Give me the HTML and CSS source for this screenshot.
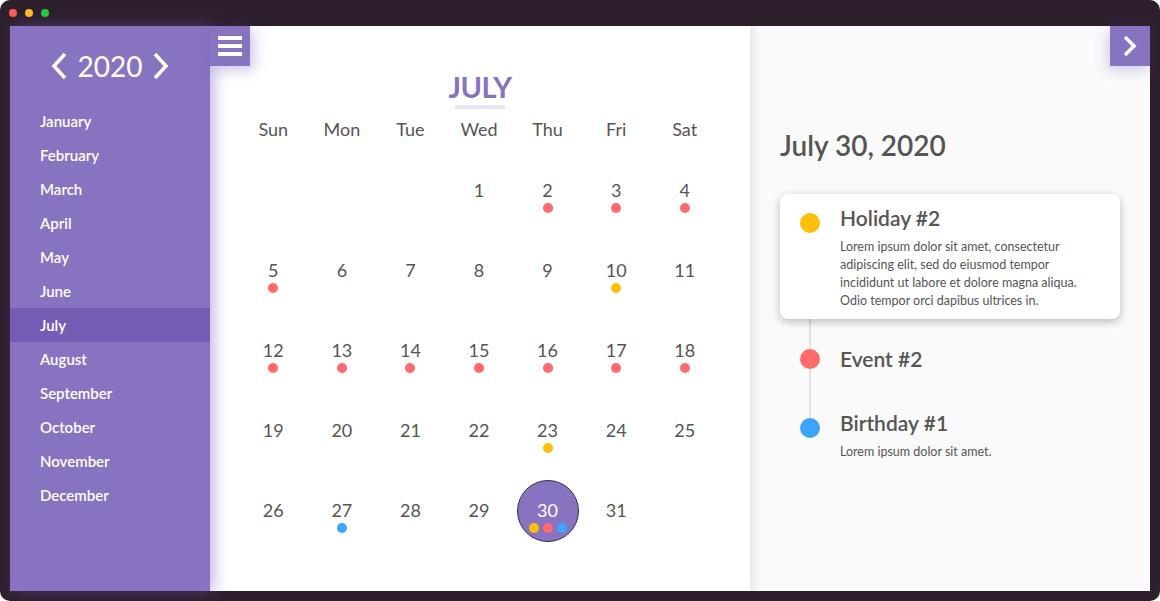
FILE: index.html
```html
<!DOCTYPE html>
<html>
<head>
<meta charset="utf-8">
<link rel="stylesheet" href="styles.css">
</head>
<body>
<div class="window">
  <div class="titlebar">
    <span class="light red"></span><span class="light yellow"></span><span class="light green"></span>
  </div>
  <div class="app">
    <aside class="sidebar">
      <div class="year">
        <svg class="chev" width="18" height="28" viewBox="0 0 18 28"><path d="M15 2 L4 14 L15 26" fill="none" stroke="#fff" stroke-width="3.5"/></svg>
        <span>2020</span>
        <svg class="chev" width="18" height="28" viewBox="0 0 18 28"><path d="M3 2 L14 14 L3 26" fill="none" stroke="#fff" stroke-width="3.5"/></svg>
      </div>
      <ul class="months">
        <li>January</li><li>February</li><li>March</li><li>April</li><li>May</li><li>June</li>
        <li class="active">July</li><li>August</li><li>September</li><li>October</li><li>November</li><li>December</li>
      </ul>
      <div class="menu-btn"><span></span><span></span><span></span></div>
    </aside>
    <main class="calendar">
      <h1 class="month-title">JULY</h1>
      <div class="grid">
        <div class="wd">Sun</div><div class="wd">Mon</div><div class="wd">Tue</div><div class="wd">Wed</div><div class="wd">Thu</div><div class="wd">Fri</div><div class="wd">Sat</div>
        <div class="day"></div><div class="day"></div><div class="day"></div>
        <div class="day"><span class="n">1</span></div>
        <div class="day"><span class="n">2</span><div class="dots"><i class="r"></i></div></div>
        <div class="day"><span class="n">3</span><div class="dots"><i class="r"></i></div></div>
        <div class="day"><span class="n">4</span><div class="dots"><i class="r"></i></div></div>
        <div class="day"><span class="n">5</span><div class="dots"><i class="r"></i></div></div>
        <div class="day"><span class="n">6</span></div>
        <div class="day"><span class="n">7</span></div>
        <div class="day"><span class="n">8</span></div>
        <div class="day"><span class="n">9</span></div>
        <div class="day"><span class="n">10</span><div class="dots"><i class="y"></i></div></div>
        <div class="day"><span class="n">11</span></div>
        <div class="day"><span class="n">12</span><div class="dots"><i class="r"></i></div></div>
        <div class="day"><span class="n">13</span><div class="dots"><i class="r"></i></div></div>
        <div class="day"><span class="n">14</span><div class="dots"><i class="r"></i></div></div>
        <div class="day"><span class="n">15</span><div class="dots"><i class="r"></i></div></div>
        <div class="day"><span class="n">16</span><div class="dots"><i class="r"></i></div></div>
        <div class="day"><span class="n">17</span><div class="dots"><i class="r"></i></div></div>
        <div class="day"><span class="n">18</span><div class="dots"><i class="r"></i></div></div>
        <div class="day"><span class="n">19</span></div>
        <div class="day"><span class="n">20</span></div>
        <div class="day"><span class="n">21</span></div>
        <div class="day"><span class="n">22</span></div>
        <div class="day"><span class="n">23</span><div class="dots"><i class="y"></i></div></div>
        <div class="day"><span class="n">24</span></div>
        <div class="day"><span class="n">25</span></div>
        <div class="day"><span class="n">26</span></div>
        <div class="day"><span class="n">27</span><div class="dots"><i class="b"></i></div></div>
        <div class="day"><span class="n">28</span></div>
        <div class="day"><span class="n">29</span></div>
        <div class="day selected"><span class="n">30</span><div class="dots"><i class="y"></i><i class="r"></i><i class="b"></i></div></div>
        <div class="day"><span class="n">31</span></div>
        <div class="day"></div>
      </div>
    </main>
    <section class="details">
      <div class="next-btn">
        <svg width="16" height="22" viewBox="0 0 16 22"><path d="M3 2 L12 11 L3 20" fill="none" stroke="#fff" stroke-width="3.5"/></svg>
      </div>
      <h2 class="date-title">July 30, 2020</h2>
      <div class="timeline">
        <div class="event card">
          <span class="dot y"></span>
          <div class="ev-body">
            <h3>Holiday #2</h3>
            <p>Lorem ipsum dolor sit amet, consectetur adipiscing elit, sed do eiusmod tempor incididunt ut labore et dolore magna aliqua. Odio tempor orci dapibus ultrices in.</p>
          </div>
        </div>
        <div class="event plain">
          <span class="dot r"></span>
          <div class="ev-body"><h3>Event #2</h3></div>
        </div>
        <div class="event last">
          <span class="dot b"></span>
          <div class="ev-body"><h3>Birthday #1</h3><p>Lorem ipsum dolor sit amet.</p></div>
        </div>
      </div>
    </section>
  </div>
</div>
</body>
</html>
```
FILE: styles.css
```css
* { box-sizing: border-box; margin: 0; padding: 0; }
html, body { width: 1160px; height: 601px; background: #fff; overflow: hidden; }
body { font-family: "Lato", "Open Sans", sans-serif; color: #555; }

.window {
  width: 1160px; height: 601px;
  background: #2e1f2d;
  border-radius: 10px;
  padding: 0 10px 10px 10px;
  display: flex; flex-direction: column;
}
.titlebar { height: 26px; display: flex; align-items: center; gap: 8px; margin-left: -1px; }
.light { width: 8px; height: 8px; border-radius: 50%; display: inline-block; }
.light.red { background: #ff5b57; }
.light.yellow { background: #fdbb2d; }
.light.green { background: #2bc83f; }

.app { flex: 1; display: flex; background: #fff; }

.sidebar {
  width: 200px; flex: none; background: #8873c1; position: relative; z-index: 3;
  box-shadow: 4px 0 14px rgba(110, 90, 190, 0.45);
  color: #fff;
}
.year { display: flex; align-items: center; justify-content: center; gap: 10px; height: 80px; font-size: 28px; }
.year span { line-height: 1; }
.months { list-style: none; margin-top: -2px; }
.months li { height: 34px; line-height: 34px; padding-left: 30px; font-size: 15px; font-weight: 600; }
.months li.active { background: #745db4; }

.menu-btn {
  position: absolute; left: 200px; top: 0; width: 40px; height: 40px; background: #8873c1;
  display: flex; flex-direction: column; align-items: center; justify-content: center; gap: 4px;
  box-shadow: 4px 4px 14px rgba(110, 90, 190, 0.35);
}
.menu-btn span { width: 24px; height: 4px; background: #fff; display: block; }

.calendar { width: 540px; flex: none; background: #fff; position: relative; z-index: 2; padding: 0 30px; box-shadow: 2px 0 10px rgba(0,0,0,0.12); }
.month-title { text-align: center; color: #8873c1; font-size: 29px; font-weight: 700; margin-top: 44px; line-height: 34px; letter-spacing: -0.5px; }
.month-title::after { content: ""; display: block; width: 50px; height: 4px; background: #e8e4f4; margin: 1px auto 0; }
.grid { display: grid; grid-template-columns: repeat(7, 1fr); grid-auto-rows: 80px; grid-template-rows: 24px; margin-top: 8px; margin-left: -1px; margin-right: 1px; }
.wd { text-align: center; font-size: 18px; line-height: 24px; color: #555; }
.day { display: flex; flex-direction: column; align-items: center; padding-top: 38px; }
.day .n { font-size: 18px; line-height: 22px; height: 22px; }
.dots { display: flex; gap: 4px; margin-top: 2px; }
.dots i, .dot { display: block; border-radius: 50%; }
.dots i { width: 10px; height: 10px; }
.r { background: #ff6b6b; }
.y { background: #fdbf08; }
.b { background: #3ba4fd; }
.day.selected { position: relative; }
.day.selected::before {
  content: ""; position: absolute; width: 60px; height: 60px; border-radius: 50%;
  background: #8873c1; border: 1px solid #3c2c56; left: 50%; top: 19px; transform: translateX(-50%);
}
.day.selected .n, .day.selected .dots { position: relative; color: #fff; }

.details { flex: 1; background: #fafafa; position: relative; padding: 104px 30px 0 30px; }
.next-btn {
  position: absolute; right: 0; top: 0; width: 40px; height: 40px; background: #8873c1;
  display: flex; align-items: center; justify-content: center;
  box-shadow: -2px 4px 14px rgba(110, 90, 190, 0.3);
}
.date-title { font-size: 28px; font-weight: 600; color: #555; line-height: 34px; margin-top: -2px; }
.timeline { margin-top: 32px; position: relative; }
.timeline::before { content: ""; position: absolute; left: 29px; top: 60px; height: 168px; width: 2px; background: #e2e2e2; }
.event { display: flex; position: relative; padding: 0 20px; }
.event .dot { width: 20px; height: 20px; flex: none; margin-top: 2px; }
.ev-body { margin-left: 20px; }
.ev-body h3 { font-size: 21px; font-weight: 600; line-height: 24px; color: #555; }
.ev-body p { font-size: 12.5px; line-height: 18px; color: #555; margin-top: 8px; }
.card { background: #fff; border-radius: 8px; box-shadow: 0 3px 8px rgba(0,0,0,0.25); padding-top: 12px; height: 125px; z-index: 1; }
.card .dot { margin-top: 7px; }
.plain { padding-top: 28px; height: 92px; }
.last .dot { margin-top: 7px; }
```
